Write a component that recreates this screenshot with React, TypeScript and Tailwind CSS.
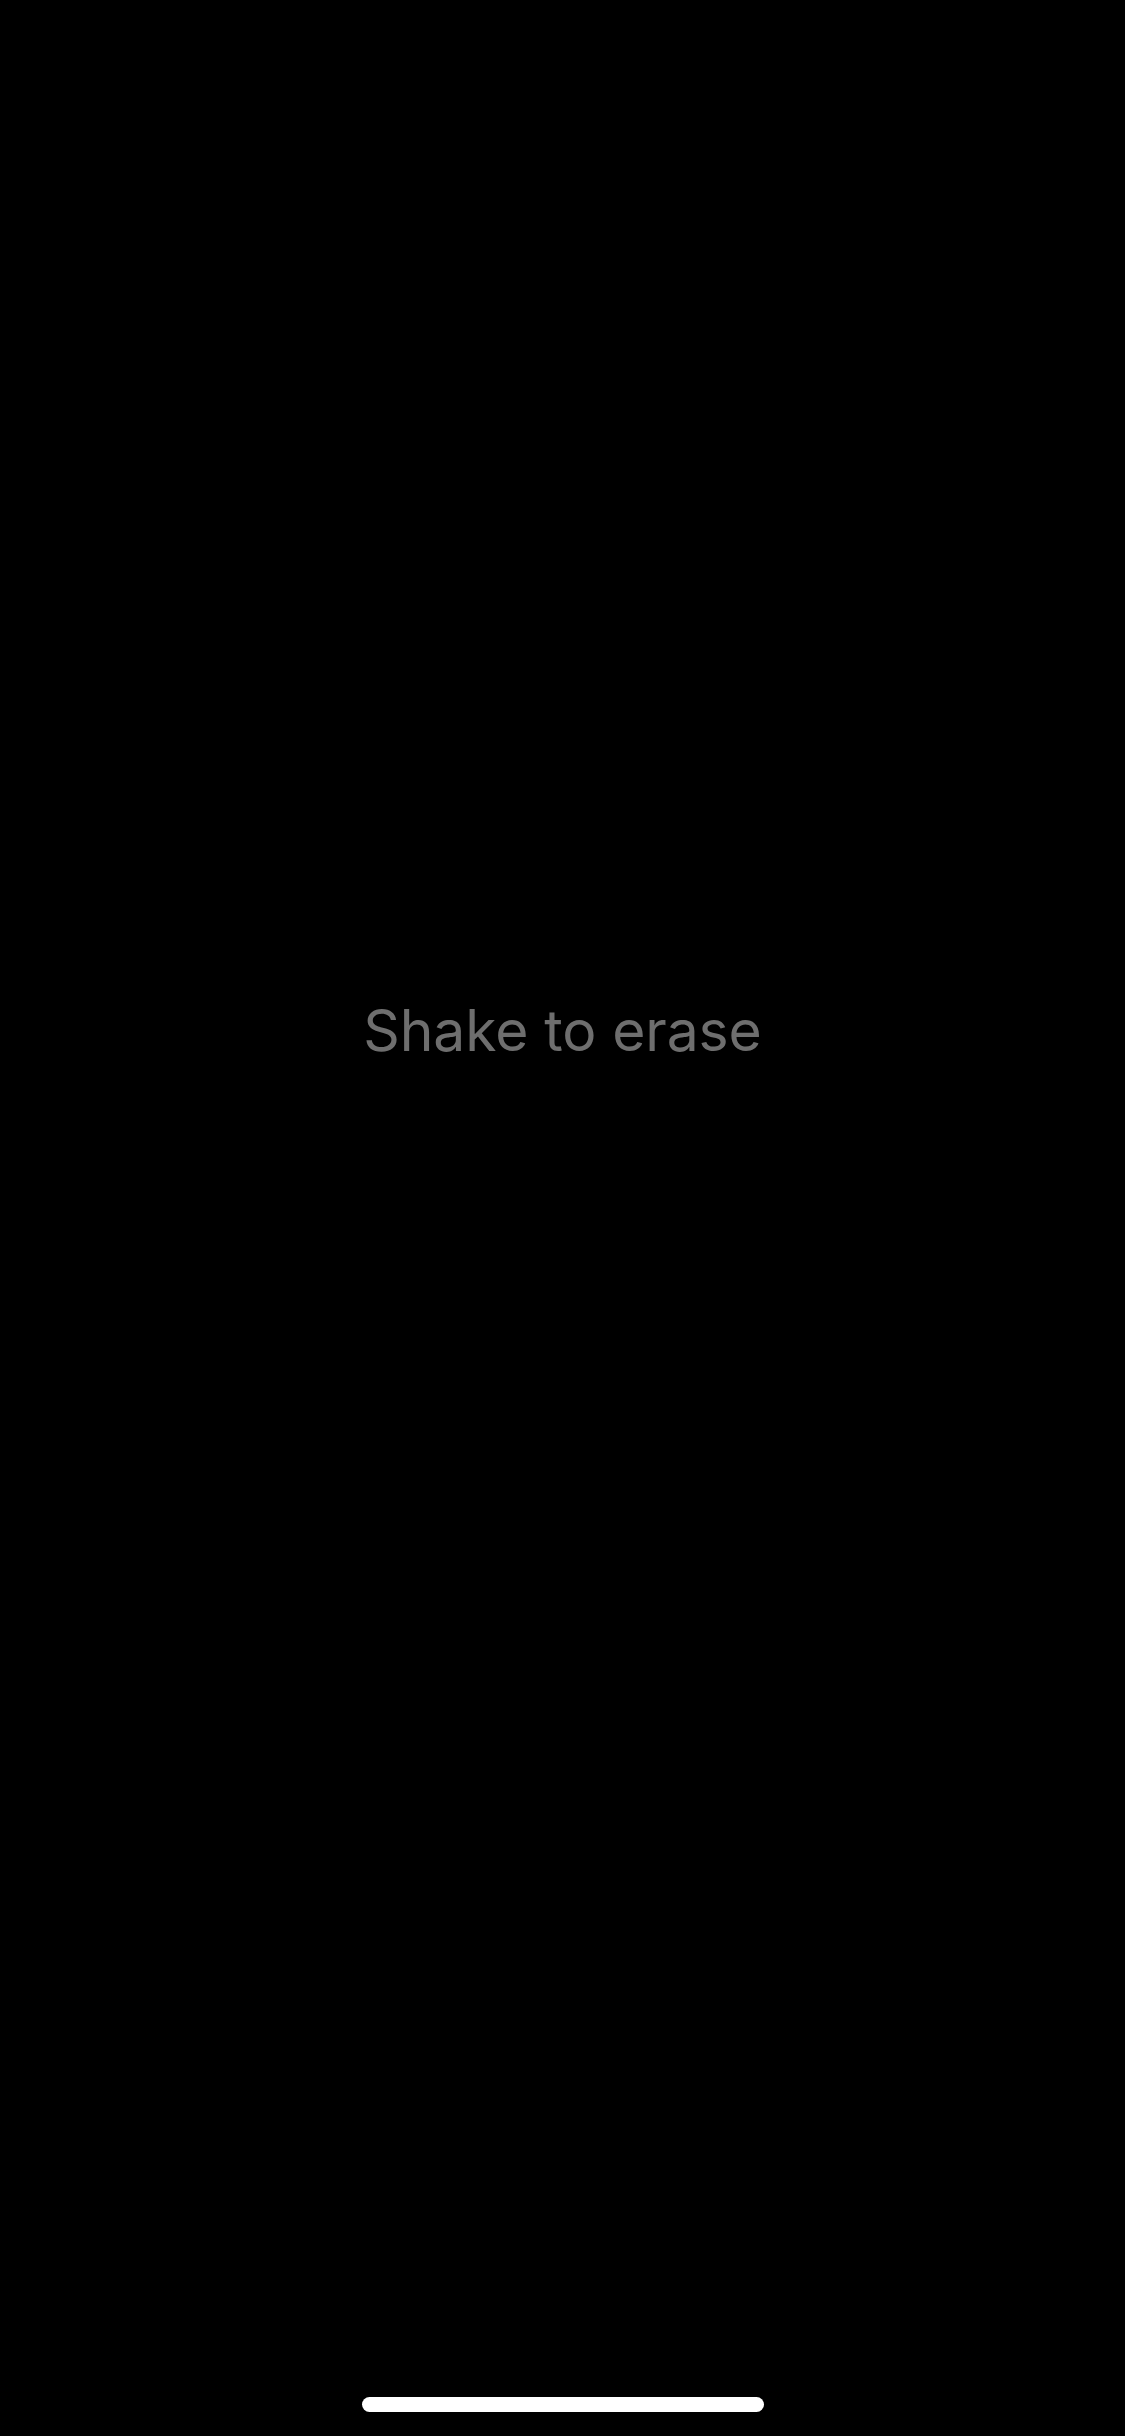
export default function App() {
  return (
    <div className="w-[1125px] h-[2436px] bg-black flex flex-col items-center font-['Inter',sans-serif]">
      {/* Hint */}
      <div className="pt-[1002px]">
        <p className="text-[57px] leading-none text-[#6e6e6e] tracking-[-0.1px]">Shake to erase</p>
      </div>

      <div className="flex-1" />

      {/* Home indicator */}
      <div className="w-[402px] h-[15px] rounded-full bg-white mb-[24px]" />
    </div>
  )
}
